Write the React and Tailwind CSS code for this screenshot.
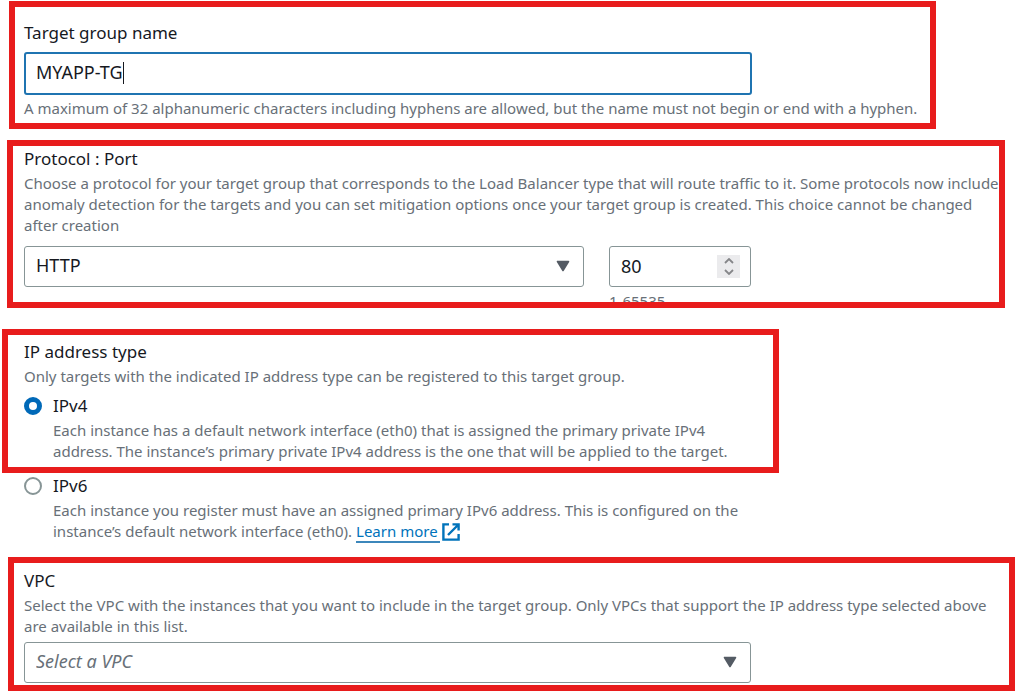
import { useState } from "react";

const labelText = "block text-[17px] leading-6 text-[#16191f]";
const hintText = "text-[15px] leading-[21px] text-[#687078]";
const fieldBox =
  "h-[41px] w-full rounded-[3px] border border-[#879596] bg-white pb-0.5 pl-[11px] text-[18px]";

function DownTriangle() {
  return (
    <svg
      aria-hidden="true"
      viewBox="0 0 14 12"
      className="pointer-events-none absolute top-[14px] right-[14px] h-3 w-[14px]"
    >
      <path d="M1.5 1.5h11L7 10.5z" fill="#545b64" stroke="#545b64" strokeWidth="1.6" strokeLinejoin="round" />
    </svg>
  );
}

function Highlight({ className, children }) {
  return <section className={`border-[6px] border-[#e81c1c] ${className}`}>{children}</section>;
}

function RadioOption({ id, title, checked, onChange, children }) {
  return (
    <div className="flex gap-[11px]">
      <input
        type="radio"
        id={id}
        name="ip-type"
        checked={checked}
        onChange={onChange}
        className="mt-[3px] size-[18px] shrink-0 appearance-none rounded-full border-2 border-[#879596] bg-white checked:border-[5px] checked:border-[#0069b8]"
      />
      <div>
        <label htmlFor={id} className={labelText}>
          {title}
        </label>
        <p className={`mt-0.5 ${hintText}`}>{children}</p>
      </div>
    </div>
  );
}

export default function App() {
  const [name, setName] = useState("MYAPP-TG");
  const [port, setPort] = useState(80);
  const [ipType, setIpType] = useState("ipv4");

  return (
    <main className="bg-white pt-px pb-1 font-['Noto_Sans',sans-serif]">
      <Highlight className="ml-[9px] max-w-[927px] pt-[14px] pb-1 pl-[9px]">
        <label htmlFor="name" className={labelText}>
          Target group name
        </label>
        <div className="mt-[7px] flex h-[43px] max-w-[728px] items-center rounded-[3px] border-2 border-[#1f74b1] bg-white pb-0.5 pl-[10px]">
          <input
            id="name"
            type="text"
            value={name}
            onChange={(e) => setName(e.target.value)}
            className="field-sizing-content text-[18px] text-[#16191f] outline-none"
          />
          <span aria-hidden="true" className="h-[22px] w-px bg-[#16191f]" />
        </div>
        <p className={`mt-[3px] ${hintText}`}>
          A maximum of 32 alphanumeric characters including hyphens are allowed, but the name must not begin or end with a hyphen.
        </p>
      </Highlight>

      <Highlight className="mt-[11px] ml-[7px] h-[168px] max-w-[998px] overflow-hidden pt-px pl-[11px]">
        <label htmlFor="protocol" className={labelText}>
          Protocol : Port
        </label>
        <p className={`mt-0.5 whitespace-nowrap ${hintText}`}>
          Choose a protocol for your target group that corresponds to the Load Balancer type that will route traffic to it. Some protocols now include
          <br />
          anomaly detection for the targets and you can set mitigation options once your target group is created. This choice cannot be changed
          <br />
          after creation
        </p>
        <div className="mt-[10px] flex max-w-[727px] gap-[25px]">
          <div className="relative flex-1">
            <select id="protocol" className={`appearance-none text-[#16191f] ${fieldBox}`}>
              <option>HTTP</option>
            </select>
            <DownTriangle />
          </div>
          <div className="w-[142px]">
            <div className="relative">
              <input
                type="number"
                aria-label="Port"
                min="1"
                max="65535"
                value={port}
                onChange={(e) => setPort(Number(e.target.value))}
                className={`[appearance:textfield] text-[#16191f] ${fieldBox}`}
              />
              <div className="absolute top-[9px] right-[11px] flex h-[23px] w-[23px] flex-col bg-[#ebebed]">
                <button type="button" aria-label="Increase port" onClick={() => setPort(port + 1)} className="flex flex-1 items-center justify-center">
                  <svg viewBox="0 0 10 6" className="h-[6px] w-[10px]" fill="none" stroke="#858689" strokeWidth="1.8">
                    <path d="M1 5l4-4 4 4" />
                  </svg>
                </button>
                <button type="button" aria-label="Decrease port" onClick={() => setPort(port - 1)} className="flex flex-1 items-center justify-center">
                  <svg viewBox="0 0 10 6" className="h-[6px] w-[10px]" fill="none" stroke="#858689" strokeWidth="1.8">
                    <path d="M1 1l4 4 4-4" />
                  </svg>
                </button>
              </div>
            </div>
            <p className={`mt-1 ${hintText}`}>1-65535</p>
          </div>
        </div>
      </Highlight>

      <div role="radiogroup" aria-labelledby="ip-title">
        <Highlight className="mt-[21px] ml-[2px] max-w-[777px] pt-[5px] pb-[5px] pl-4">
          <h2 id="ip-title" className={labelText}>
            IP address type
          </h2>
          <p className={`mt-0.5 mb-[7px] ${hintText}`}>
            Only targets with the indicated IP address type can be registered to this target group.
          </p>
          <RadioOption id="ipv4" title="IPv4" checked={ipType === "ipv4"} onChange={() => setIpType("ipv4")}>
            Each instance has a default network interface (eth0) that is assigned the primary private IPv4
            <br />
            address. The instance’s primary private IPv4 address is the one that will be applied to the target.
          </RadioOption>
        </Highlight>
        <div className="mt-px pl-6">
          <RadioOption id="ipv6" title="IPv6" checked={ipType === "ipv6"} onChange={() => setIpType("ipv6")}>
            Each instance you register must have an assigned primary IPv6 address. This is configured on the
            <br />
            instance’s default network interface (eth0).{" "}
            <a href="#learn-more" className="text-[#0073bb]">
              <span className="border-b-2 border-[#3c87bb] pr-0.5">Learn more</span>
              <svg
                aria-hidden="true"
                viewBox="0 0 18 18"
                className="ml-0.5 inline-block size-[18px] align-[-4px]"
                fill="none"
                stroke="#0073bb"
                strokeWidth="2.4"
              >
                <path d="M7 1.4H1.4v15.2h15.2V11M10.5 1.4h6.1v6M16 2L6 12" />
              </svg>
            </a>
          </RadioOption>
        </div>
      </div>

      <Highlight className="mt-[15px] ml-2 max-w-[1007px] pt-[6px] pb-0.5 pl-[10px]">
        <label htmlFor="vpc" className={labelText}>
          VPC
        </label>
        <p className={`mt-0.5 ${hintText}`}>
          Select the VPC with the instances that you want to include in the target group. Only VPCs that support the IP address type selected above
          <br />
          are available in this list.
        </p>
        <div className="relative mt-[5px] max-w-[727px]">
          <select id="vpc" className={`appearance-none text-[#687078] italic ${fieldBox}`}>
            <option>Select a VPC</option>
          </select>
          <DownTriangle />
        </div>
      </Highlight>
    </main>
  );
}
